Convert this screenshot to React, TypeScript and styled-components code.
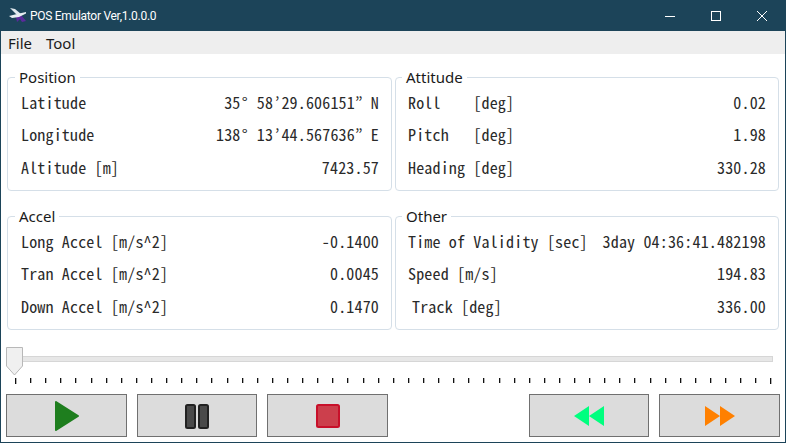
import { createGlobalStyle } from "styled-components"
import styled from "styled-components"

const GlobalStyle = createGlobalStyle`
    html, body {
        margin: 0;
        padding: 0;
        background: #fff;
    }
`

const Window = styled.div`
    box-sizing: border-box;
    width: 786px;
    height: 443px;
    border: 1px solid #1c4459;
    border-top: 0;
    display: flex;
    flex-direction: column;
    background: #fff;
    overflow: hidden;
    font-family: "Noto Sans Mono CJK JP", "DejaVu Sans Mono", monospace;
`

const TitleBar = styled.div`
    height: 31px;
    flex: none;
    background: #1c4459;
    display: flex;
    align-items: center;
    padding-left: 8px;
    color: #fff;
`

const TitleText = styled.span`
    font-family: Roboto, "Noto Sans", sans-serif;
    font-size: 12px;
    letter-spacing: -0.28px;
`

const WindowButtons = styled.div`
    margin-left: auto;
    display: flex;
    height: 100%;
`

const WindowButton = styled.div`
    width: 46px;
    height: 100%;
    display: flex;
    align-items: center;
    justify-content: center;
`

const MenuBar = styled.div`
    height: 23px;
    flex: none;
    background: #eeeeee;
    display: flex;
    align-items: center;
    gap: 14px;
    padding-left: 7px;
    font-family: "Noto Sans", "Open Sans", sans-serif;
    font-size: 15px;
    color: #1a1a1a;
`

const Panels = styled.div`
    display: grid;
    grid-template-columns: 385px 384px;
    column-gap: 3px;
    row-gap: 15px;
    padding: 13px 0 0 6px;
`

const Panel = styled.fieldset`
    box-sizing: border-box;
    height: 124px;
    min-width: 0;
    margin: 0;
    padding: 0;
    border: 1px solid #d5dfe8;
    border-radius: 4px;
`

const PanelTitle = styled.legend`
    height: 20px;
    line-height: 20px;
    margin-left: ${p => p.$offset}px;
    padding: 0 4px;
    font-family: "Noto Sans", "Open Sans", sans-serif;
    font-size: 15px;
    color: #1a1a1a;
`

const Rows = styled.div`
    margin-top: -1.5px;
    padding: 0 12px 0 ${p => p.$left}px;
`

const Row = styled.div`
    height: 32.5px;
    display: flex;
    align-items: center;
    justify-content: space-between;
    font-size: 16px;
    letter-spacing: 0.17px;
    color: #2a2a2a;
    white-space: pre;
`

const Label = styled.span`
    padding-left: ${p => p.$indent || 0}px;
`

// these two glyphs come out narrow in the mono font, keep them on the character grid
const Mark = styled.span`
    display: inline-block;
    width: 8.17px;
    letter-spacing: 0;
    text-align: center;
`

const SliderArea = styled.div`
    position: relative;
    margin: 17px 0 0 5px;
    width: 767px;
`

const Track = styled.div`
    box-sizing: border-box;
    height: 6px;
    margin-top: 9px;
    background: #e7e7e7;
    border: 1px solid #d6d6d6;
`

const Thumb = styled.svg`
    position: absolute;
    left: 0;
    top: 0;
`

const Ticks = styled.div`
    display: flex;
    justify-content: space-between;
    margin: 16px 0 0 9px;
    width: 757px;
`

const Tick = styled.div`
    width: 1px;
    height: ${p => (p.$long ? 6 : 5)}px;
    margin-bottom: ${p => (p.$long ? 0 : 1)}px;
    background: #111;
    box-shadow: 1px 0 0 #b4b4b4;
`

const Controls = styled.div`
    display: flex;
    gap: 10px;
    margin: 10px 0 0 5px;
`

const ControlButton = styled.button`
    box-sizing: border-box;
    width: ${p => p.$width}px;
    height: 43px;
    margin-left: ${p => p.$gapLeft || 0}px;
    padding: 0;
    background: #dcdcdc;
    border: 1px solid #707070;
    display: flex;
    align-items: center;
    justify-content: center;
`

const positionRows = [
    { label: "Latitude", value: "35° 58’29.606151” N" },
    { label: "Longitude", value: "138° 13’44.567636” E" },
    { label: "Altitude [m]", value: "7423.57" },
]

const attitudeRows = [
    { label: "Roll    [deg]", value: "0.02" },
    { label: "Pitch   [deg]", value: "1.98" },
    { label: "Heading [deg]", value: "330.28" },
]

const accelRows = [
    { label: "Long Accel [m/s^2]", value: "-0.1400" },
    { label: "Tran Accel [m/s^2]", value: "0.0045" },
    { label: "Down Accel [m/s^2]", value: "0.1470" },
]

const otherRows = [
    { label: "Time of Validity [sec]", value: "3day 04:36:41.482198" },
    { label: "Speed [m/s]", value: "194.83" },
    { label: "Track [deg]", value: "336.00", indent: 4 },
]

const tickCount = 51

const Value = ({ text }) => (
    <span>
        {text.split(/([°’])/).map((part, i) =>
            part === "°" || part === "’" ? <Mark key={i}>{part}</Mark> : part
        )}
    </span>
)

const DataPanel = ({ title, rows, titleOffset, left }) => (
    <Panel>
        <PanelTitle $offset={titleOffset}>{title}</PanelTitle>
        <Rows $left={left}>
            {rows.map(row => (
                <Row key={row.label}>
                    <Label $indent={row.indent}>{row.label}</Label>
                    <Value text={row.value} />
                </Row>
            ))}
        </Rows>
    </Panel>
)

const AppIcon = () => (
    <svg width="21" height="16" viewBox="0 0 21 16">
        <path d="M7 9 L12 7 L17 13 L13 14 L11 11 L8 14 Z" fill="#5b2a9c" />
        <path d="M1 0 L6 1 L12 6 L7 6 Z" fill="#dfe8ee" />
        <path d="M0 8 L8 6 L17 4 L17 5.5 L10 9 L3 10 Z" fill="#e8eef2" />
    </svg>
)

const App = () => {
    return (
        <Window>
            <GlobalStyle />
            <TitleBar>
                <AppIcon />
                <TitleText>POS Emulator Ver,1.0.0.0</TitleText>
                <WindowButtons>
                    <WindowButton>
                        <svg width="10" height="10" viewBox="0 0 10 10">
                            <path d="M0 5.5 H10" stroke="#fff" strokeWidth="1" />
                        </svg>
                    </WindowButton>
                    <WindowButton>
                        <svg width="10" height="10" viewBox="0 0 10 10">
                            <rect x="0.5" y="0.5" width="9" height="9" fill="none" stroke="#fff" />
                        </svg>
                    </WindowButton>
                    <WindowButton>
                        <svg width="10" height="10" viewBox="0 0 10 10">
                            <path d="M0 0 L10 10 M10 0 L0 10" stroke="#fff" strokeWidth="1" />
                        </svg>
                    </WindowButton>
                </WindowButtons>
            </TitleBar>
            <MenuBar>
                <span>File</span>
                <span>Tool</span>
            </MenuBar>
            <Panels>
                <DataPanel title="Position" rows={positionRows} titleOffset={7} left={13} />
                <DataPanel title="Attitude" rows={attitudeRows} titleOffset={6} left={12} />
                <DataPanel title="Accel" rows={accelRows} titleOffset={7} left={13} />
                <DataPanel title="Other" rows={otherRows} titleOffset={6} left={12} />
            </Panels>
            <SliderArea>
                <Track />
                <Thumb width="18" height="29" viewBox="0 0 18 29">
                    <path d="M0.5 0.5 H16.5 V19 L8.5 28 L0.5 19 Z" fill="#f0f0f0" stroke="#b8b8b8" />
                </Thumb>
                <Ticks>
                    {Array.from({ length: tickCount }, (_, i) => (
                        <Tick key={i} $long={i === 0 || i === tickCount - 1} />
                    ))}
                </Ticks>
            </SliderArea>
            <Controls>
                <ControlButton $width={121}>
                    <svg width="26" height="32" viewBox="0 0 26 32">
                        <path d="M2 2 L24 16 L2 30 Z" fill="#1e7e1e" stroke="#1e7e1e" strokeWidth="2" strokeLinejoin="round" />
                    </svg>
                </ControlButton>
                <ControlButton $width={120}>
                    <svg width="26" height="26" viewBox="0 0 26 26">
                        <rect x="2" y="2" width="9" height="23" rx="1.5" fill="#4a4a4a" stroke="#222" strokeWidth="2" />
                        <rect x="15" y="2" width="9" height="23" rx="1.5" fill="#4a4a4a" stroke="#222" strokeWidth="2" />
                    </svg>
                </ControlButton>
                <ControlButton $width={121}>
                    <svg width="26" height="26" viewBox="0 0 26 26">
                        <rect x="2" y="2" width="22" height="22" rx="1.5" fill="#cc3f4c" stroke="#c8102a" strokeWidth="2" />
                    </svg>
                </ControlButton>
                <ControlButton $width={120} $gapLeft={131}>
                    <svg width="30" height="20" viewBox="0 0 30 20">
                        <path d="M15 0 V20 L0 10 Z M30 0 V20 L15 10 Z" fill="#00ff7f" />
                    </svg>
                </ControlButton>
                <ControlButton $width={121}>
                    <svg width="30" height="20" viewBox="0 0 30 20">
                        <path d="M0 0 V20 L15 10 Z M15 0 V20 L30 10 Z" fill="#ff8000" />
                    </svg>
                </ControlButton>
            </Controls>
        </Window>
    )
}

export default App
